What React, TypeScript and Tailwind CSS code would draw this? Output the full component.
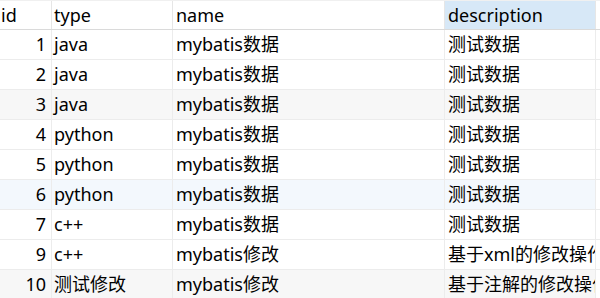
import React from 'react';

const rows = [
  { id: 1, type: 'java', name: 'mybatis数据', description: '测试数据', bg: 'bg-white' },
  { id: 2, type: 'java', name: 'mybatis数据', description: '测试数据', bg: 'bg-white' },
  { id: 3, type: 'java', name: 'mybatis数据', description: '测试数据', bg: 'bg-[#f7f7f7]' },
  { id: 4, type: 'python', name: 'mybatis数据', description: '测试数据', bg: 'bg-white' },
  { id: 5, type: 'python', name: 'mybatis数据', description: '测试数据', bg: 'bg-white' },
  { id: 6, type: 'python', name: 'mybatis数据', description: '测试数据', bg: 'bg-[#f3f8fd]' },
  { id: 7, type: 'c++', name: 'mybatis数据', description: '测试数据', bg: 'bg-white' },
  { id: 9, type: 'c++', name: 'mybatis修改', description: '基于xml的修改操作', bg: 'bg-white' },
  { id: 10, type: '测试修改', name: 'mybatis修改', description: '基于注解的修改操作', bg: 'bg-[#f7f7f7]' },
];

const font = { fontFamily: '"Noto Sans", "Noto Sans CJK SC", sans-serif' };

export default function App() {
  return (
    <div className="w-[600px] h-[298px] overflow-hidden bg-white text-[18px] text-black" style={font}>
      <div className="flex h-[30px] border-t border-[#f0f0f0] border-b border-b-[#dadada]">
        <div className="w-[52px] shrink-0 border-r border-[#e6e6e6] pl-[1px] leading-[28px]">id</div>
        <div className="w-[121px] shrink-0 border-r border-[#e6e6e6] pl-[2px] leading-[28px]">type</div>
        <div className="w-[272px] shrink-0 border-r border-[#e6e6e6] pl-[3px] leading-[28px]">name</div>
        <div className="w-[151px] shrink-0 border-r border-[#e6e6e6] bg-[#d7e8f7] pl-[3px] leading-[28px]">description</div>
        <div className="flex-1" />
      </div>
      {rows.map((r) => (
        <div key={r.id} className={`flex h-[30px] border-b border-[#ececec] ${r.bg}`}>
          <div className="w-[52px] shrink-0 border-r border-[#ececec] pr-[5px] text-right leading-[29px]">{r.id}</div>
          <div className="w-[121px] shrink-0 border-r border-[#ececec] pl-[2px] leading-[29px] whitespace-nowrap overflow-hidden">{r.type}</div>
          <div className="w-[272px] shrink-0 border-r border-[#ececec] pl-[3px] leading-[29px] whitespace-nowrap overflow-hidden">{r.name}</div>
          <div className="w-[151px] shrink-0 border-r border-[#ececec] pl-[3px] leading-[29px] whitespace-nowrap overflow-hidden">{r.description}</div>
          <div className="flex-1 bg-white" />
        </div>
      ))}
    </div>
  );
}
